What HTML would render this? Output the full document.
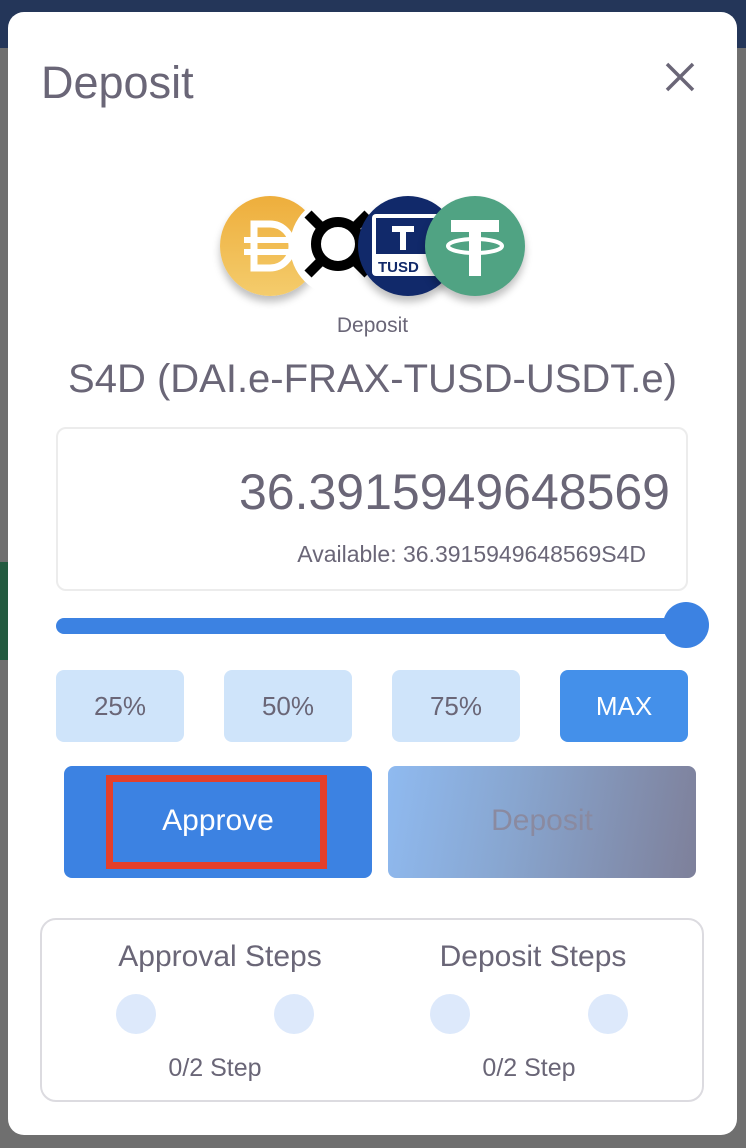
<!DOCTYPE html>
<html><head><meta charset="utf-8"><style>
*{margin:0;padding:0;box-sizing:border-box}
body{width:746px;height:1148px;background:#6f6f6f;position:relative;overflow:hidden;font-family:"Liberation Sans",sans-serif;color:#6a6677}
.top{position:absolute;left:0;top:0;width:746px;height:48px;background:#243659}
.green{position:absolute;left:0;top:562px;width:10px;height:98px;background:#235a40}
.modal{position:absolute;left:8px;top:12px;width:729px;height:1123px;background:#fff;border-radius:16px}
.abs{position:absolute}
.title{left:33px;top:45px;font-size:45px;color:#6a6677}
.close{left:655px;top:48px}
.coin{position:absolute;top:184px;width:100px;height:100px;border-radius:50%;box-shadow:0 6px 8px rgba(0,0,0,.25);overflow:hidden}
.sub{left:0;width:729px;text-align:center}
.box{left:48px;top:415px;width:632px;height:164px;border:2px solid #ececec;border-radius:10px}
.pct{position:absolute;top:658px;width:128px;height:72px;border-radius:8px;background:#cfe4fa;font-size:26px;text-align:center;line-height:72px;color:#6a6677}
.steps{left:32px;top:906px;width:664px;height:184px;border:2px solid #dcdbe0;border-radius:16px}
.dot{position:absolute;width:40px;height:40px;border-radius:50%;background:#dde9fb}
</style></head><body>
<div class="top"></div><div class="green"></div>
<div class="modal">
<div class="abs title">Deposit</div>
<svg class="abs close" width="34" height="34" viewBox="0 0 34 34"><path d="M4 4L30 30M30 4L4 30" stroke="#6a6677" stroke-width="3.5"/></svg>

<div class="coin" style="left:212px;background:linear-gradient(#eeae3c,#f4cc6c)">
<svg width="100" height="100" viewBox="0 0 100 100"><path d="M34 28h16a22 22 0 0 1 0 44H34z" fill="none" stroke="#fff" stroke-width="7"/><path d="M24 44h52M24 56h52" stroke="#fff" stroke-width="6"/></svg></div>
<div class="coin" style="left:282px;background:#fff;z-index:1;box-shadow:none">
<svg width="100" height="100" viewBox="0 0 100 100"><circle cx="48" cy="48" r="22" fill="none" stroke="#000" stroke-width="10"/><path d="M18 18l14 14M78 18l-14 14M18 78l14-14M78 78l-14-14" stroke="#000" stroke-width="10"/></svg></div>
<div class="coin" style="left:350px;background:#11296a;z-index:2">
<svg width="100" height="100" viewBox="0 0 100 100"><rect x="14" y="18" width="74" height="62" rx="4" fill="#fff"/><rect x="18" y="22" width="66" height="36" fill="#11296a"/><path d="M34 30h22v6h-8v18h-6V36h-8z" fill="#fff"/><text x="20" y="76" font-family="Liberation Sans" font-weight="bold" font-size="15" fill="#11296a">TUSD</text></svg></div>
<div class="coin" style="left:417px;background:#50a383;z-index:3">
<svg width="100" height="100" viewBox="0 0 100 100"><path d="M26 24h48v12H56v44H44V36H26z" fill="#fff"/><ellipse cx="50" cy="50" rx="27" ry="7" fill="none" stroke="#fff" stroke-width="4"/></svg></div>

<div class="abs sub" style="top:302px;font-size:21px">Deposit</div>
<div class="abs sub" style="top:345px;font-size:40px">S4D (DAI.e-FRAX-TUSD-USDT.e)</div>
<div class="abs box">
<div class="abs" style="right:16px;top:34px;font-size:50px;color:#6a6677">36.3915949648569</div>
<div class="abs" style="right:40px;top:112px;font-size:23px">Available: 36.3915949648569S4D</div>
</div>
<div class="abs" style="left:48px;top:606px;width:622px;height:16px;border-radius:8px;background:#3c82e2"></div>
<div class="abs" style="left:655px;top:590px;width:46px;height:46px;border-radius:50%;background:#3c82e2"></div>
<div class="pct" style="left:48px">25%</div>
<div class="pct" style="left:216px">50%</div>
<div class="pct" style="left:384px">75%</div>
<div class="pct" style="left:552px;background:#4490ea;color:#fff">MAX</div>
<div class="abs" style="left:56px;top:754px;width:308px;height:112px;border-radius:8px;background:#3c82e2"></div>
<div class="abs" style="left:98px;top:763px;width:221px;height:94px;border:7px solid #e43f2a"></div>
<div class="abs" style="left:56px;top:792px;width:308px;text-align:center;font-size:30px;color:#fff">Approve</div>
<div class="abs" style="left:380px;top:754px;width:308px;height:112px;border-radius:8px;background:linear-gradient(100deg,#8fbaf0 0%,#88a6d0 40%,#7e809a 100%)"></div>
<div class="abs" style="left:380px;top:792px;width:308px;text-align:center;font-size:30px;color:#8a8aa0">Deposit</div>
<div class="abs steps">
<div class="abs" style="left:0;width:356px;text-align:center;top:20px;font-size:30px">Approval Steps</div>
<div class="abs" style="left:318px;width:346px;text-align:center;top:20px;font-size:30px">Deposit Steps</div>
<div class="dot" style="left:74px;top:74px"></div>
<div class="dot" style="left:232px;top:74px"></div>
<div class="dot" style="left:388px;top:74px"></div>
<div class="dot" style="left:546px;top:74px"></div>
<div class="abs" style="left:70px;width:206px;text-align:center;top:134px;font-size:25px">0/2 Step</div>
<div class="abs" style="left:384px;width:206px;text-align:center;top:134px;font-size:25px">0/2 Step</div>
</div>
</div>
</body></html>
